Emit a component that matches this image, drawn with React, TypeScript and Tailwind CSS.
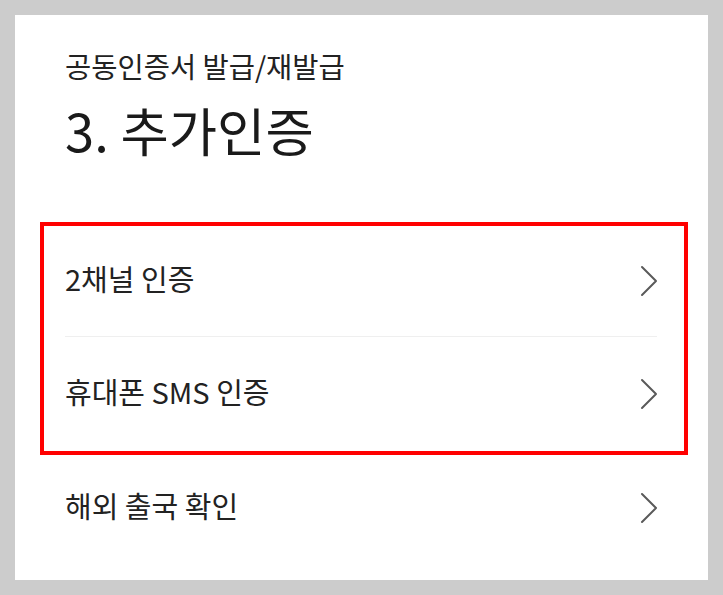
import React from "react";

function Chevron() {
  return (
    <svg width="18" height="32" viewBox="0 0 18 32" fill="none" className="shrink-0">
      <polyline
        points="2,2 16,16 2,30"
        stroke="#5a5a5a"
        strokeWidth="2"
        strokeLinecap="round"
        strokeLinejoin="round"
      />
    </svg>
  );
}

function Row({ label, className }: { label: string; className: string }) {
  return (
    <div className={`flex items-center justify-between ${className}`}>
      <span className="-mt-[6px] text-[29px] leading-none text-[#222]">{label}</span>
      <Chevron />
    </div>
  );
}

export default function App() {
  return (
    <div
      className="h-[595px] w-[723px] bg-[#cccccc] p-[15px]"
      style={{ fontFamily: '"Noto Sans CJK KR", "Noto Sans", sans-serif' }}
    >
      <div className="flex h-full flex-col bg-white">
        <div className="pl-[50px]">
          <div className="mt-[33px] text-[28.5px] leading-[36px] text-[#222]">공동인증서 발급/재발급</div>
          <div className="mt-[15px] text-[52.5px] leading-[60px] text-[#1a1a1a]">3. 추가인증</div>
        </div>

        <div className="mt-[63px] ml-[25px] mr-[20px] border-4 border-[#ff0000]">
          <Row label="2채널 인증" className="h-[110px] ml-[21px] mr-[26px]" />
          <div className="ml-[21px] mr-[27px] h-px bg-[#efefef]" />
          <Row label="휴대폰 SMS 인증" className="h-[114px] ml-[21px] mr-[26px]" />
        </div>

        <Row label="해외 출국 확인" className="h-[106px] ml-[50px] mr-[50px]" />
      </div>
    </div>
  );
}
